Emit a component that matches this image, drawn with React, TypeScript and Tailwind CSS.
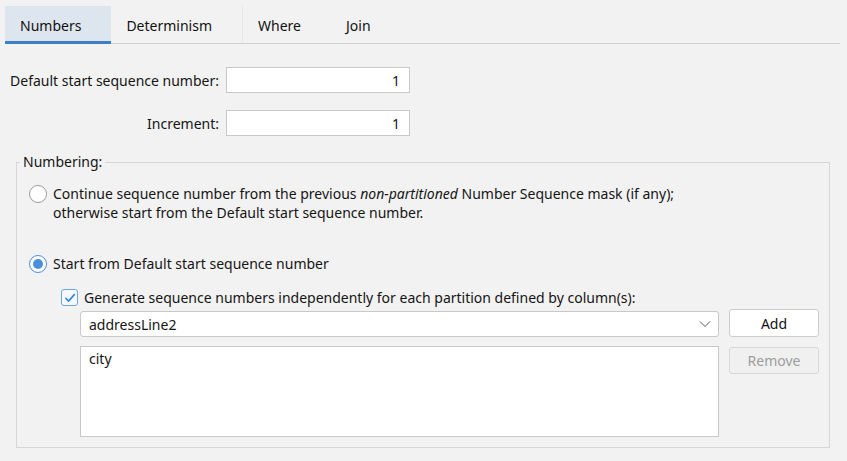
import React from "react";

const font = { fontFamily: '"Noto Sans", "Open Sans", Arial, sans-serif' };

function Tab({ label, active, sep }: { label: string; active?: boolean; sep?: boolean }) {
  return (
    <div
      className={
        "relative flex h-[38px] items-center pl-[15px] pr-[30px] pt-[3px] -mb-px " +
        (active ? "bg-[#dde5ee] border-b-[3px] border-[#3d7fc4]" : "border-b-[3px] border-transparent") +
        (sep ? " border-l border-l-[#e6e6e6]" : "")
      }
    >
      <span className="text-[14px] text-[#111]">{label}</span>
    </div>
  );
}

function Radio({ checked }: { checked?: boolean }) {
  return checked ? (
    <span className="flex h-[18px] w-[18px] shrink-0 items-center justify-center rounded-full border-[1.5px] border-[#4a8fd8] bg-white">
      <span className="block h-[10px] w-[10px] rounded-full bg-[#4a8fd8]" />
    </span>
  ) : (
    <span className="block h-[18px] w-[18px] shrink-0 rounded-full border border-[#9c9c9c] bg-white" />
  );
}

export default function App() {
  return (
    <div className="h-[461px] w-[847px] overflow-hidden bg-[#f2f2f2] text-[#151515]" style={font}>
      {/* tab strip */}
      <div className="ml-[5px] mt-[6px] flex w-[835px] border-b border-[#d2d2d2]">
        <Tab label="Numbers" active />
        <Tab label="Determinism" />
        <Tab label="Where" sep />
        <Tab label="Join" />
      </div>

      {/* start / increment */}
      <div className="mt-[23px] grid grid-cols-[215px_184px] items-center gap-x-[7px] gap-y-[17px] pl-[4px] text-[14px]">
        <span className="whitespace-nowrap text-right">Default start sequence number:</span>
        <div className="flex h-[26px] items-center justify-end border border-[#c8c8c8] bg-white pr-[9px]">1</div>
        <span className="whitespace-nowrap text-right">Increment:</span>
        <div className="flex h-[26px] items-center justify-end border border-[#c8c8c8] bg-white pr-[9px]">1</div>
      </div>

      {/* numbering group */}
      <fieldset className="mx-[16px] mt-[16px] h-[296px] w-[814px] border border-[#d6d6d6] pb-[10px] pl-[12px] pr-[10px] text-[14px]">
        <legend className="-ml-[9px] px-[3px] leading-[20px]">Numbering:</legend>

        <div className="mt-[12px] flex items-start gap-[6px]">
          <div className="pt-[1px]">
            <Radio />
          </div>
          <div className="leading-[19px]">
            <div>
              Continue sequence number from the previous <i>non-partitioned</i> Number Sequence mask (if any);
            </div>
            <div>otherwise start from the Default start sequence number.</div>
          </div>
        </div>

        <div className="mt-[31px] flex items-center gap-[6px]">
          <Radio checked />
          <span>Start from Default start sequence number</span>
        </div>

        <div className="ml-[32px] mt-[13px] flex items-center gap-[6px]">
          <span className="flex h-[17px] w-[17px] items-center justify-center rounded-[3px] border border-[#6aa6e6] bg-[#f5f9fe]">
            <svg width="12" height="12" viewBox="0 0 12 12" fill="none">
              <path d="M1.8 6.3 L4.6 9.1 L10.3 2.6" stroke="#3a86d6" strokeWidth="1.6" strokeLinecap="round" strokeLinejoin="round" />
            </svg>
          </span>
          <span>Generate sequence numbers independently for each partition defined by column(s):</span>
        </div>

        <div className="ml-[51px] mt-[1px] flex gap-[10px]">
          <div className="flex flex-col gap-[9px]">
            <div className="mt-[2px] flex h-[26px] w-[639px] items-center justify-between rounded-[3px] border border-[#c8c8c8] bg-white pl-[8px] pr-[7px]">
              <span>addressLine2</span>
              <svg width="12" height="8" viewBox="0 0 12 8" fill="none">
                <path d="M1 1.5 L6 6.5 L11 1.5" stroke="#555" strokeWidth="1" />
              </svg>
            </div>
            <div className="h-[91px] w-[639px] border border-[#c8c8c8] bg-white pl-[8px] pt-[1px]">city</div>
          </div>
          <div className="flex flex-col gap-[10px]">
            <button className="flex h-[28px] w-[90px] items-center justify-center rounded-[3px] border border-[#cdcdcd] bg-white text-[#111]">
              Add
            </button>
            <button className="flex h-[27px] w-[90px] items-center justify-center rounded-[3px] border border-[#d8d8d8] bg-[#f0f0f0] text-[#9d9d9d]">
              Remove
            </button>
          </div>
        </div>
      </fieldset>
    </div>
  );
}
